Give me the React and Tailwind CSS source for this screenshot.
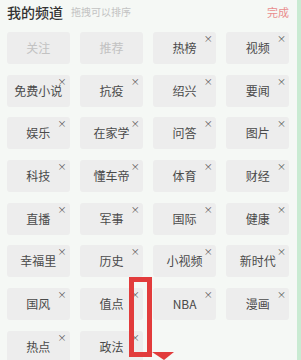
import React from "react";

const rows = [
  ["关注", "推荐", "热榜", "视频"],
  ["免费小说", "抗疫", "绍兴", "要闻"],
  ["娱乐", "在家学", "问答", "图片"],
  ["科技", "懂车帝", "体育", "财经"],
  ["直播", "军事", "国际", "健康"],
  ["幸福里", "历史", "小视频", "新时代"],
  ["国风", "值点", "NBA", "漫画"],
  ["热点", "政法"],
];

const fixed = ["关注", "推荐"];

const Tile = ({ name }) => {
  const locked = fixed.includes(name);
  return (
    <div className="relative h-[32px] rounded-[3px] bg-[#ededed] flex items-center justify-center">
      <span className={`text-[12px] ${locked ? "text-[#c2c2c2]" : "text-[#4a4a4a]"}`}>{name}</span>
      {!locked && (
        <span className="absolute top-[2px] right-[3px] text-[9px] leading-none text-[#555]">×</span>
      )}
    </div>
  );
};

export default function App() {
  return (
    <div
      className="relative w-[301px] h-[360px] overflow-hidden bg-[#f5f8f5] flex"
      style={{ fontFamily: '"Noto Sans CJK SC", "Noto Sans", sans-serif' }}
    >
      <div className="w-[297px] pl-[7px] pr-[8px]">
        {/* header */}
        <div className="h-[24px] flex items-center">
          <span className="text-[14px] font-medium text-[#333] leading-none">我的频道</span>
          <span className="ml-[8px] text-[10px] text-[#c3c3c3] leading-none">拖拽可以排序</span>
          <span className="ml-auto text-[11px] text-[#e98d8d] leading-none">完成</span>
        </div>

        {/* channel grid */}
        <div className="mt-[8px] grid grid-cols-4 gap-x-[10.5px] gap-y-[10.7px]">
          {rows.flat().map((n) => (
            <Tile key={n} name={n} />
          ))}
        </div>
      </div>

      {/* green edge */}
      <div className="w-[4px] bg-[#c9ebd2]" />

      {/* red annotation */}
      <div className="absolute left-[129px] top-[277px] w-[23px] h-[80px] border-[5px] border-[#e23c3c]" />
      <svg className="absolute left-[148px] top-[350px]" width="30" height="10" viewBox="0 0 30 10">
        <polygon points="4,2 26,2 16,10" fill="#e23c3c" />
      </svg>
    </div>
  );
}
